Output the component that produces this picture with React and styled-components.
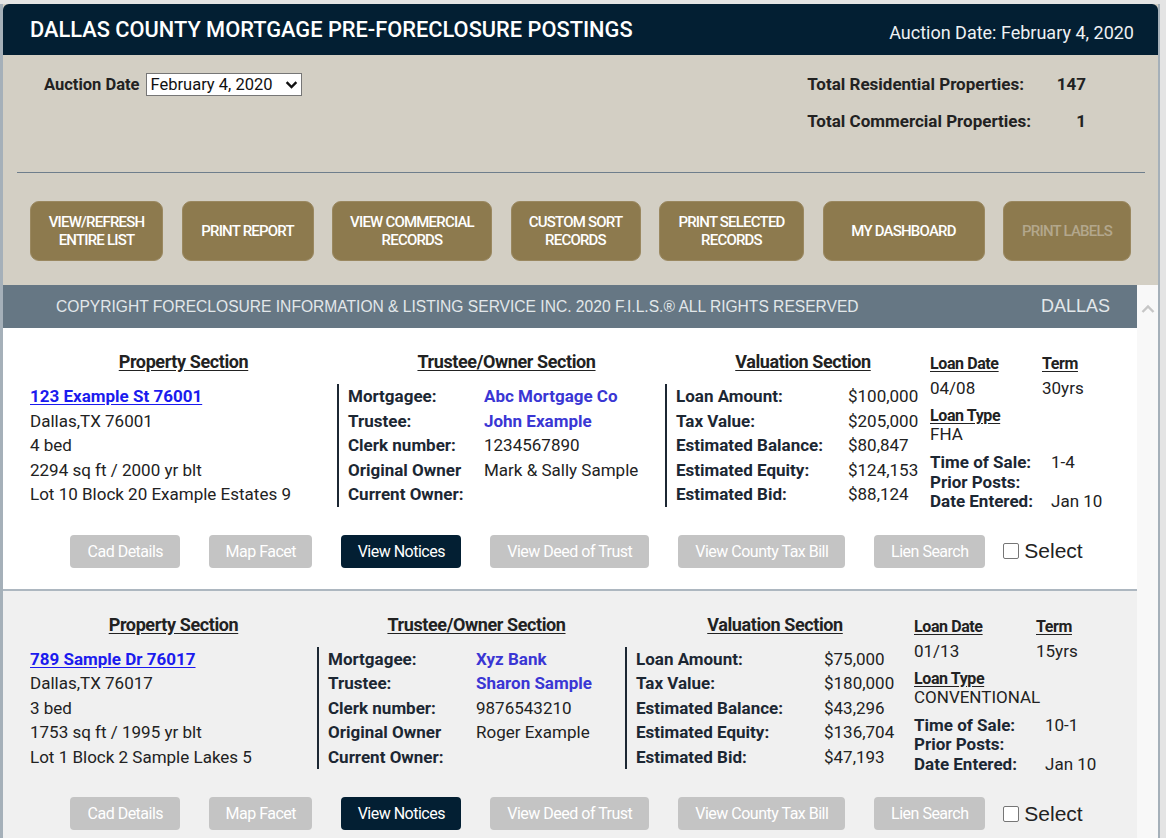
import React from 'react'
import styled, { createGlobalStyle } from 'styled-components'

const GlobalStyle = createGlobalStyle`
html, body {
  margin: 0;
  padding: 0;
  overflow: hidden;
  background: #e4e4e4;
}
* {
  box-sizing: border-box;
}
`

const Frame = styled.div`
width: 1160px;
height: 838px;
margin-top: 4px;
border-left: 3px solid #a5b0b9;
border-right: 2px solid #a5b0b9;
background: #d3cfc4;
overflow: hidden;
font-family: Roboto, "Liberation Sans", sans-serif;
`

const TopBar = styled.div`
display: flex;
justify-content: space-between;
align-items: center;
height: 51px;
padding: 0 24px 0 27px;
background: #031f33;
border-radius: 6px 6px 0 0;
color: #ffffff;
`

const Title = styled.h1`
margin: 0;
font-size: 21.8px;
font-weight: 500;
`

const TopDate = styled.div`
font-size: 18px;
padding-top: 6px;
color: #eef1f4;
`

const Panel = styled.div`
padding: 19px 13px 24px 14px;
background: #d3cfc4;
`

const InfoRow = styled.div`
display: flex;
justify-content: space-between;
padding: 0 59px 0 27px;
`

const DateField = styled.div`
display: flex;
align-items: center;
gap: 6px;
height: 20px;
font-size: 16.5px;
font-weight: 700;
color: #222;
`

const SelectBox = styled.div`
display: flex;
align-items: center;
justify-content: space-between;
width: 156px;
height: 23px;
padding: 0 3px 0 4px;
background: #fff;
border: 1px solid #767676;
font-size: 16.5px;
font-weight: 400;
color: #111;
`

const Totals = styled.div`
display: grid;
grid-template-columns: auto 55px;
row-gap: 17px;
font-size: 17px;
font-weight: 700;
color: #222;
line-height: 20px;
`

const TotalValue = styled.span`
text-align: right;
`

const Rule = styled.hr`
margin: 41px 0 28px;
border: none;
border-top: 1px solid #6e7e8c;
`

const ButtonBar = styled.div`
display: flex;
justify-content: space-between;
padding: 0 14px 0 13px;
`

const GoldButton = styled.button`
width: ${p => p.$w}px;
height: 60px;
padding: 0 6px;
border: 1px solid #9a8860;
border-radius: 9px;
background: #8d7a4e;
color: ${p => (p.$disabled ? '#b3a78c' : '#ffffff')};
font-family: Roboto, sans-serif;
font-size: 15px;
font-weight: 500;
line-height: 18px;
letter-spacing: -0.8px;
text-transform: uppercase;
cursor: pointer;
`

const ListArea = styled.div`
display: flex;
background: #ffffff;
`

const ListContent = styled.div`
flex: 1;
min-width: 0;
`

const Scrollbar = styled.div`
width: 21px;
display: flex;
justify-content: center;
padding-top: 19px;
background: #f8f8f8;
`

const CopyBar = styled.div`
display: flex;
justify-content: space-between;
align-items: center;
height: 43px;
padding: 0 27px 0 53px;
background: #667784;
color: #e2e7ea;
font-family: "Liberation Sans", Arial, sans-serif;
font-size: 15.6px;
`

const CopyCity = styled.span`
font-size: 18px;
`

const Record = styled.div`
padding: 23px 0 21px 27px;
background: ${p => (p.$alt ? '#f0f0f0' : '#ffffff')};
border-bottom: 2px solid #adb7c0;
`

const Columns = styled.div`
display: grid;
grid-template-columns: ${p => p.$cols};
`

const Column = styled.div`
display: flex;
flex-direction: column;
`

const SectionHead = styled.div`
padding-left: ${p => (p.$first ? 0 : 11)}px;
text-align: center;
font-size: 18px;
font-weight: 700;
line-height: 22px;
letter-spacing: -0.4px;
text-decoration: underline;
text-underline-offset: 2px;
color: #222;
`

const Body = styled.div`
margin-top: 11px;
padding-left: ${p => (p.$divider ? 9 : 0)}px;
border-left: ${p => (p.$divider ? '2px solid #1c2733' : 'none')};
font-size: 17px;
line-height: 24.5px;
color: #222;
`

const AddressLink = styled.a`
color: #1b1bee;
font-weight: 700;
text-decoration: underline;
text-underline-offset: 2px;
`

const Pair = styled.div`
display: grid;
grid-template-columns: ${p => p.$w}px auto;
`

const Label = styled.span`
font-weight: 700;
color: #1c2733;
`

const Highlight = styled.span`
font-weight: 700;
color: #3a36d4;
`

const Meta = styled.div`
padding-top: 2px;
font-size: 17px;
color: #222;
`

const MetaGrid = styled.div`
display: grid;
grid-template-columns: ${p => p.$w}px auto;
line-height: ${p => p.$lh}px;
margin-top: ${p => p.$mt || 0}px;
`

const MetaHead = styled.span`
font-size: 16px;
font-weight: 700;
letter-spacing: -0.4px;
text-decoration: underline;
text-underline-offset: 2px;
color: #222;
`

const MetaLabel = styled.span`
font-weight: 700;
color: #1c2733;
`

const Actions = styled.div`
display: flex;
justify-content: center;
align-items: center;
gap: 29px;
margin-top: 23px;
padding-right: 14px;
`

const ActionButton = styled.button`
width: ${p => p.$w}px;
height: 33px;
border: none;
border-radius: 4px;
background: ${p => (p.$active ? '#031f33' : '#c4c4c4')};
color: #ffffff;
font-family: Roboto, sans-serif;
font-size: 16px;
letter-spacing: -0.5px;
cursor: pointer;
`

const SelectLabel = styled.label`
display: flex;
align-items: center;
gap: 5px;
margin-left: -11px;
font-family: "Liberation Sans", Arial, sans-serif;
font-size: 21px;
color: #222;
`

const Check = styled.span`
width: 16px;
height: 16px;
background: #fff;
border: 1px solid #767676;
border-radius: 2px;
`

const topButtons = [
  { label: 'View/Refresh\nEntire List', w: 133 },
  { label: 'Print Report', w: 132 },
  { label: 'View Commercial\nRecords', w: 160 },
  { label: 'Custom Sort\nRecords', w: 130 },
  { label: 'Print Selected\nRecords', w: 145 },
  { label: 'My Dashboard', w: 162 },
  { label: 'Print Labels', w: 128, disabled: true }
]

const actions = [
  { label: 'Cad Details', w: 110 },
  { label: 'Map Facet', w: 103 },
  { label: 'View Notices', w: 120, active: true },
  { label: 'View Deed of Trust', w: 159 },
  { label: 'View County Tax Bill', w: 167 },
  { label: 'Lien Search', w: 111 }
]

const records = [
  {
    id: 1,
    address: '123 Example St 76001',
    city: 'Dallas,TX 76001',
    beds: '4 bed',
    size: '2294 sq ft / 2000 yr blt',
    legal: 'Lot 10 Block 20 Example Estates 9',
    mortgagee: 'Abc Mortgage Co',
    trustee: 'John Example',
    clerk: '1234567890',
    original: 'Mark & Sally Sample',
    values: ['$100,000', '$205,000', '$80,847', '$124,153', '$88,124'],
    loanDate: '04/08',
    term: '30yrs',
    loanType: 'FHA',
    timeOfSale: '1-4',
    dateEntered: 'Jan 10',
    cols: '307px 328px 265px 1fr',
    ownerW: 136,
    valW: 172,
    dateW: 112,
    metaW: 121
  },
  {
    id: 2,
    address: '789 Sample Dr 76017',
    city: 'Dallas,TX 76017',
    beds: '3 bed',
    size: '1753 sq ft / 1995 yr blt',
    legal: 'Lot 1 Block 2 Sample Lakes 5',
    mortgagee: 'Xyz Bank',
    trustee: 'Sharon Sample',
    clerk: '9876543210',
    original: 'Roger Example',
    values: ['$75,000', '$180,000', '$43,296', '$136,704', '$47,193'],
    loanDate: '01/13',
    term: '15yrs',
    loanType: 'CONVENTIONAL',
    timeOfSale: '10-1',
    dateEntered: 'Jan 10',
    cols: '287px 308px 289px 1fr',
    ownerW: 148,
    valW: 188,
    dateW: 122,
    metaW: 131
  }
]

const valueLabels = ['Loan Amount:', 'Tax Value:', 'Estimated Balance:', 'Estimated Equity:', 'Estimated Bid:']

const Chevron = ({ size = 12, color = '#111', width = 2.2 }) => (
  <svg width={size} height={size} viewBox="0 0 12 12">
    <path d="M1.5 3.8 L6 8.3 L10.5 3.8" fill="none" stroke={color} strokeWidth={width} />
  </svg>
)

const ListingRecord = ({ r, alt }) => {
  return (
    <Record $alt={alt}>
      <Columns $cols={r.cols}>
        <Column>
          <SectionHead $first>Property Section</SectionHead>
          <Body>
            <div><AddressLink href="#">{r.address}</AddressLink></div>
            <div>{r.city}</div>
            <div>{r.beds}</div>
            <div>{r.size}</div>
            <div>{r.legal}</div>
          </Body>
        </Column>
        <Column>
          <SectionHead>Trustee/Owner Section</SectionHead>
          <Body $divider>
            <Pair $w={r.ownerW}><Label>Mortgagee:</Label><Highlight>{r.mortgagee}</Highlight></Pair>
            <Pair $w={r.ownerW}><Label>Trustee:</Label><Highlight>{r.trustee}</Highlight></Pair>
            <Pair $w={r.ownerW}><Label>Clerk number:</Label><span>{r.clerk}</span></Pair>
            <Pair $w={r.ownerW}><Label>Original Owner</Label><span>{r.original}</span></Pair>
            <Pair $w={r.ownerW}><Label>Current Owner:</Label><span></span></Pair>
          </Body>
        </Column>
        <Column>
          <SectionHead>Valuation Section</SectionHead>
          <Body $divider>
            {valueLabels.map((label, i) => (
              <Pair key={label} $w={r.valW}><Label>{label}</Label><span>{r.values[i]}</span></Pair>
            ))}
          </Body>
        </Column>
        <Meta>
          <MetaGrid $w={r.dateW} $lh={22}>
            <MetaHead>Loan Date</MetaHead>
            <MetaHead>Term</MetaHead>
          </MetaGrid>
          <MetaGrid $w={r.dateW} $lh={20} $mt={3}>
            <span>{r.loanDate}</span>
            <span>{r.term}</span>
          </MetaGrid>
          <MetaGrid $w={r.dateW} $lh={19} $mt={8}>
            <MetaHead>Loan Type</MetaHead>
          </MetaGrid>
          <MetaGrid $w={200} $lh={18}>
            <span>{r.loanType}</span>
          </MetaGrid>
          <MetaGrid $w={r.metaW} $lh={19.5} $mt={10}>
            <MetaLabel>Time of Sale:</MetaLabel><span>{r.timeOfSale}</span>
            <MetaLabel>Prior Posts:</MetaLabel><span></span>
            <MetaLabel>Date Entered:</MetaLabel><span>{r.dateEntered}</span>
          </MetaGrid>
        </Meta>
      </Columns>
      <Actions>
        {actions.map(a => (
          <ActionButton key={a.label} $w={a.w} $active={a.active}>{a.label}</ActionButton>
        ))}
        <SelectLabel>
          <Check />
          Select
        </SelectLabel>
      </Actions>
    </Record>
  )
}

export default function App() {
  return (
    <>
      <GlobalStyle />
      <Frame>
        <TopBar>
          <Title>DALLAS COUNTY MORTGAGE PRE-FORECLOSURE POSTINGS</Title>
          <TopDate>Auction Date: February 4, 2020</TopDate>
        </TopBar>
        <Panel>
          <InfoRow>
            <DateField>
              Auction Date
              <SelectBox>
                February 4, 2020
                <Chevron size={13} />
              </SelectBox>
            </DateField>
            <Totals>
              <span>Total Residential Properties:</span>
              <TotalValue>147</TotalValue>
              <span>Total Commercial Properties:</span>
              <TotalValue>1</TotalValue>
            </Totals>
          </InfoRow>
          <Rule />
          <ButtonBar>
            {topButtons.map(b => (
              <GoldButton key={b.label} $w={b.w} $disabled={b.disabled}>
                {b.label.split('\n').map(line => <div key={line}>{line}</div>)}
              </GoldButton>
            ))}
          </ButtonBar>
        </Panel>
        <ListArea>
          <ListContent>
            <CopyBar>
              <span>COPYRIGHT FORECLOSURE INFORMATION &amp; LISTING SERVICE INC. 2020 F.I.L.S.® ALL RIGHTS RESERVED</span>
              <CopyCity>DALLAS</CopyCity>
            </CopyBar>
            {records.map((r, i) => (
              <ListingRecord key={r.id} r={r} alt={i % 2 === 1} />
            ))}
          </ListContent>
          <Scrollbar>
            <svg width="14" height="10" viewBox="0 0 14 10">
              <path d="M1.5 8 L7 2.5 L12.5 8" fill="none" stroke="#c6c6c6" strokeWidth="2.4" />
            </svg>
          </Scrollbar>
        </ListArea>
      </Frame>
    </>
  )
}
